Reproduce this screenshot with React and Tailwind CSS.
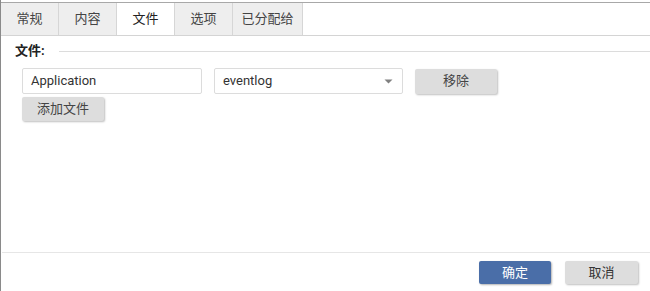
import React from 'react';

const tabs = [
  { label: '常规', w: 'w-[58px]' },
  { label: '内容', w: 'w-[58px]' },
  { label: '文件', w: 'w-[58px]', active: true },
  { label: '选项', w: 'w-[58px]' },
  { label: '已分配给', w: 'w-[70px]' },
];

const App = () => {
  return (
    <div className="w-[650px] h-[291px] bg-white flex flex-col border-l border-l-[#8a8a8a] text-[13px] text-[#333] font-['Roboto','Noto_Sans_CJK_SC',sans-serif] overflow-hidden">
      {/* Tabs */}
      <div className="mt-[2px] border-t border-t-[#a8a8a8] border-b border-b-[#d4d4d4] flex h-[34px]">
        {tabs.map((t) => (
          <div
            key={t.label}
            className={`${t.w} flex items-center justify-center border-r border-r-[#d6d6d6] ${t.active ? 'bg-white text-[#222]' : 'bg-[#eeeeee] text-[#444]'}`}
          >
            {t.label}
          </div>
        ))}
      </div>

      {/* Body */}
      <div className="flex-1 flex flex-col pl-[14px]">
        <div className="flex items-center mt-[6px] h-[18px]">
          <span className="font-bold text-[#222] text-[13px]">文件:</span>
          <div className="flex-1 ml-[14px] border-t border-t-[#dcdcdc]" />
        </div>

        <div className="flex items-center mt-[8px] ml-[7px] gap-[12px]">
          <div className="w-[180px] h-[26px] border border-[#dcdcdc] rounded-[2px] flex items-center px-[8px] text-[#333]">
            Application
          </div>
          <div className="w-[189px] h-[26px] border border-[#dcdcdc] rounded-[2px] flex items-center justify-between pl-[8px] pr-[9px] text-[#333]">
            <span>eventlog</span>
            <svg width="9" height="5" viewBox="0 0 9 5">
              <path d="M0.5 0.5 L8.5 0.5 L4.5 4.5 Z" fill="#808080" />
            </svg>
          </div>
          <button className="w-[82px] h-[25px] bg-[#dddddd] rounded-[2px] shadow-[1px_1px_2px_rgba(0,0,0,0.25)] text-[#444] text-[13px]">
            移除
          </button>
        </div>

        <div className="ml-[7px] mt-[3px]">
          <button className="w-[82px] h-[24px] bg-[#dddddd] rounded-[2px] shadow-[1px_1px_2px_rgba(0,0,0,0.25)] text-[#444] text-[13px]">
            添加文件
          </button>
        </div>
      </div>

      {/* Footer */}
      <div className="border-t border-t-[#e6e6e6] ml-[1px] h-[39px] flex items-start justify-end pt-[8px] pr-[12px] gap-[14px]">
        <button className="w-[72px] h-[23px] bg-[#4a6ea8] rounded-[2px] shadow-[1px_1px_2px_rgba(0,0,0,0.3)] text-white text-[13px]">
          确定
        </button>
        <button className="w-[73px] h-[23px] bg-[#dddddd] rounded-[2px] shadow-[1px_1px_2px_rgba(0,0,0,0.25)] text-[#333] text-[13px]">
          取消
        </button>
      </div>
    </div>
  );
};

export default App;
